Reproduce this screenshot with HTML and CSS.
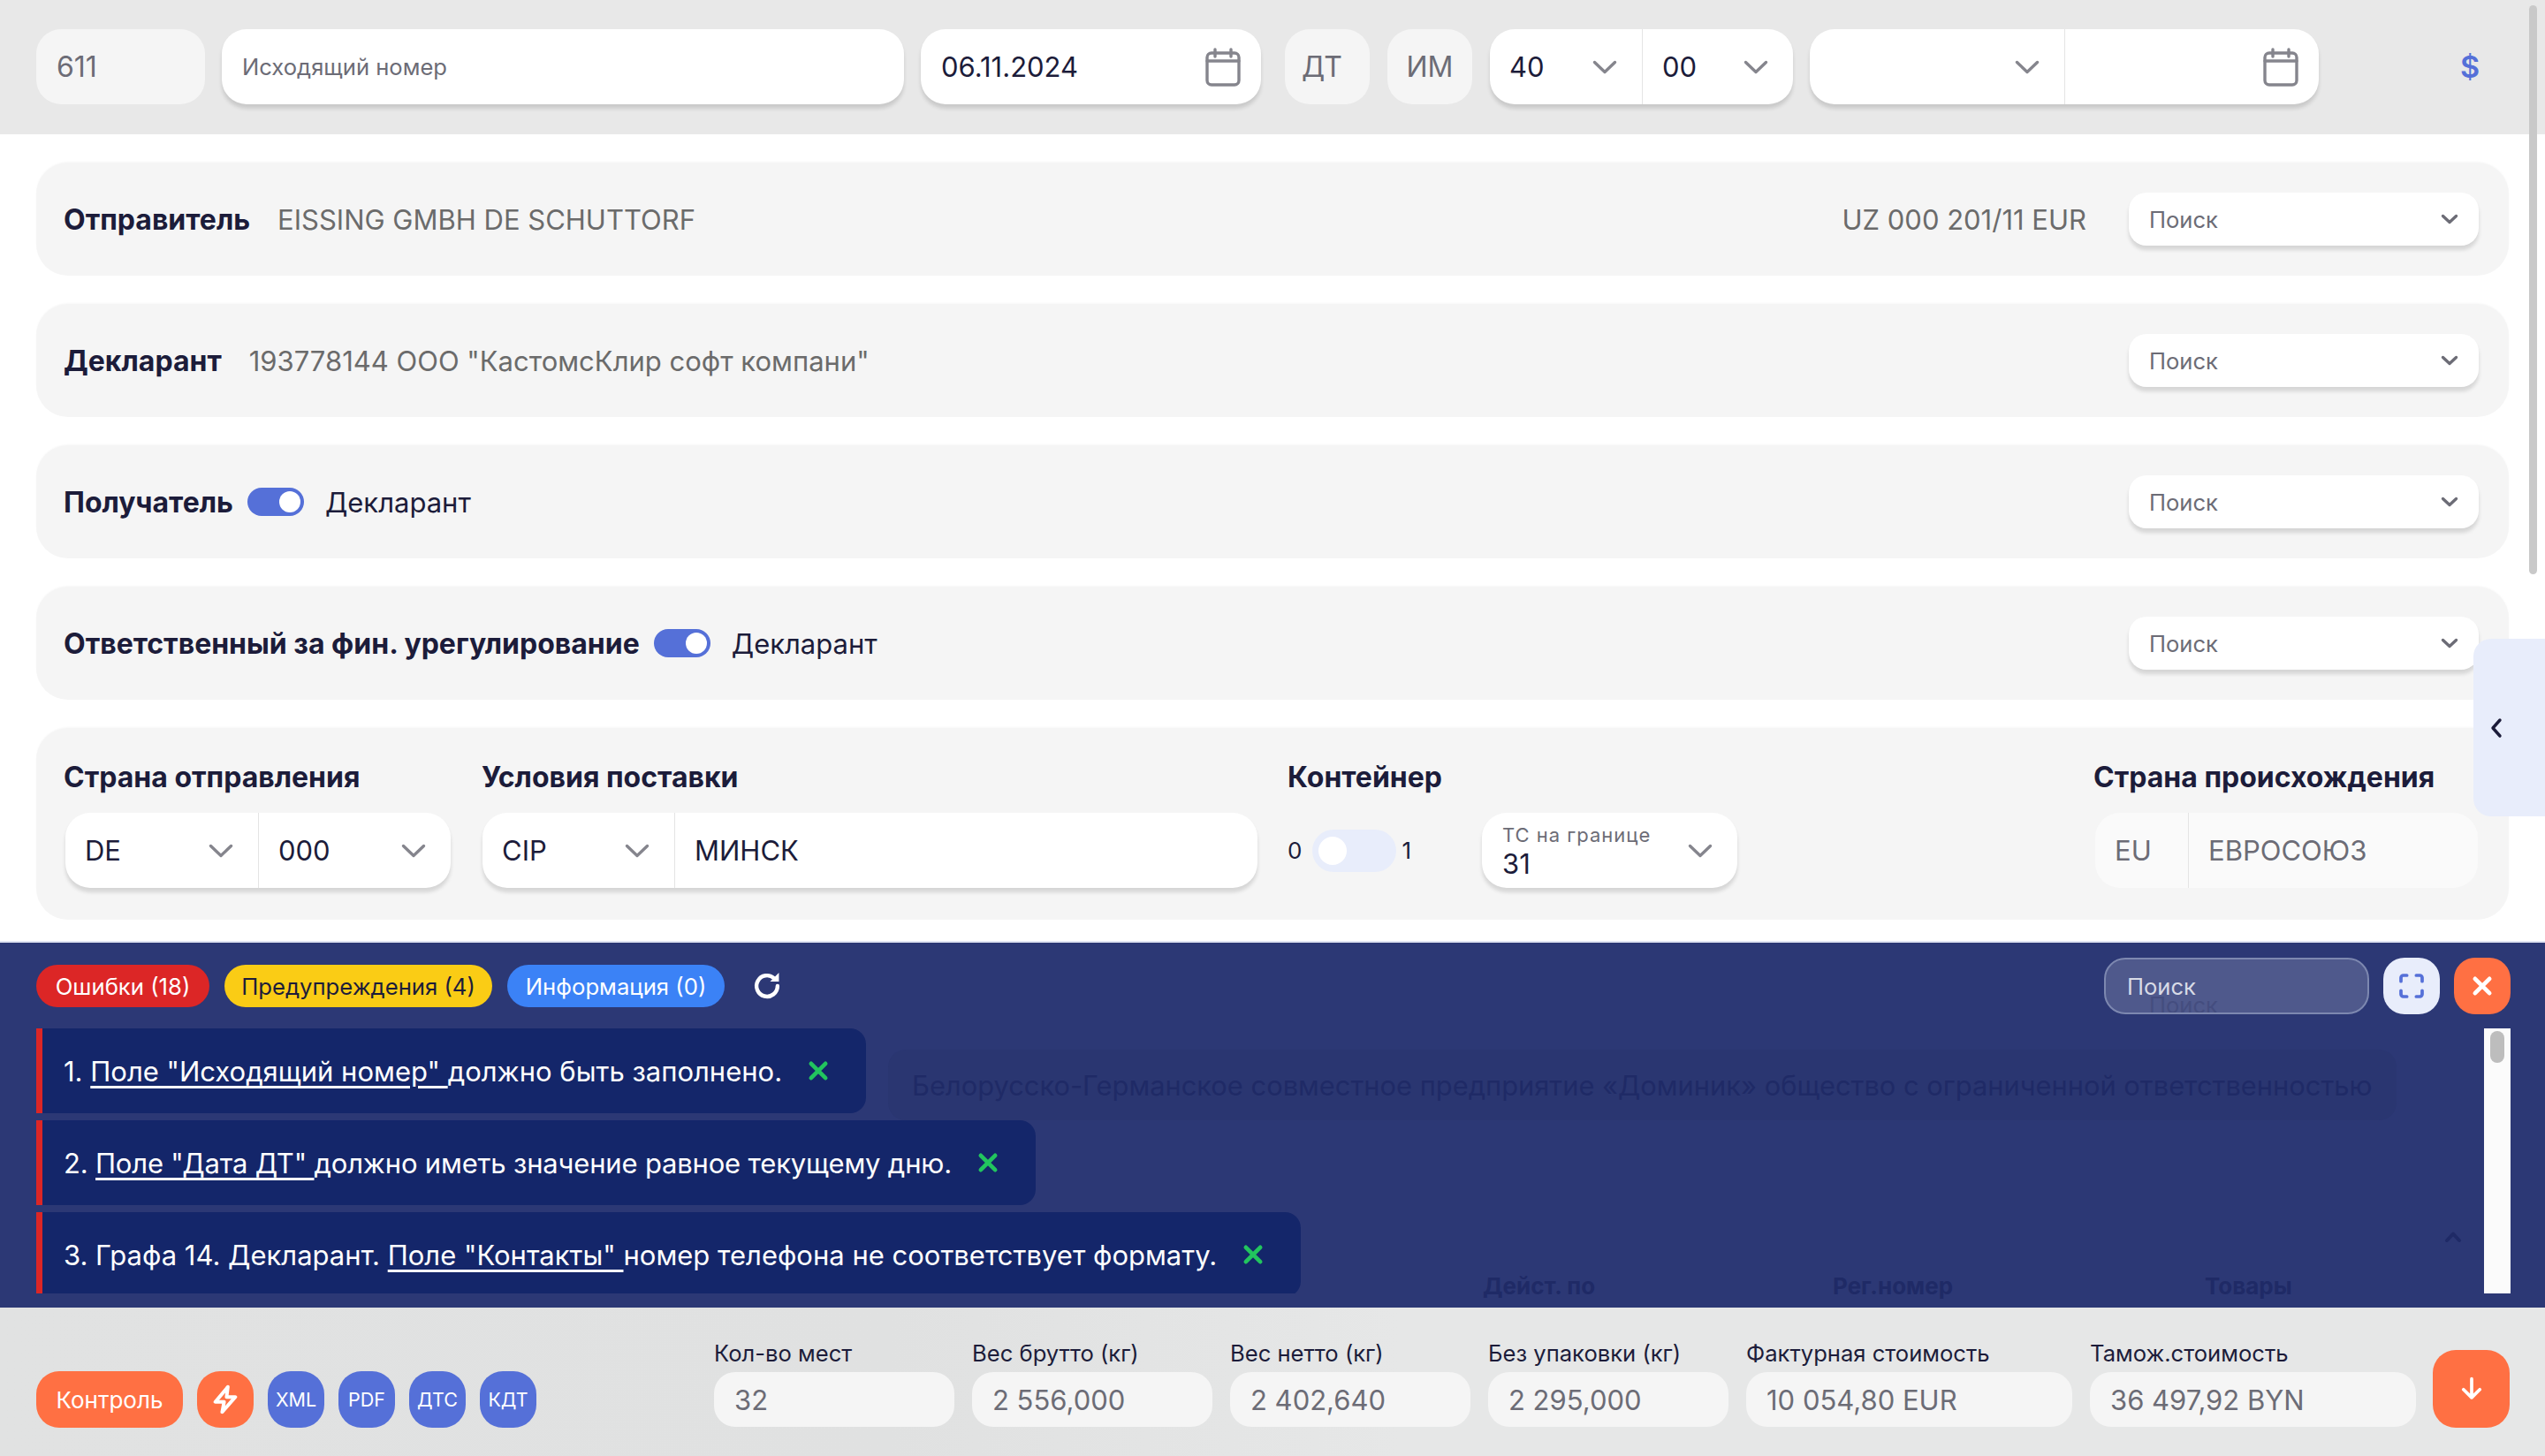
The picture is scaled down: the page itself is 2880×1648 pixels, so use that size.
FILE: index.html
```html
<!DOCTYPE html>
<html lang="ru">
<head>
  <meta charset="utf-8">
  <title>Декларация</title>
  <link rel="stylesheet" href="styles.css">
</head>
<body>
  <svg class="sprite" width="0" height="0">
    <symbol id="chev" viewBox="0 0 28 16"><path d="M2.5 2.5 14 13.5 25.5 2.5" fill="none" stroke="currentColor" stroke-width="3.4" stroke-linecap="round" stroke-linejoin="round"/></symbol>
    <symbol id="chev-bold" viewBox="0 0 20 12"><path d="M2.5 2.5 10 9.5 17.5 2.5" fill="none" stroke="currentColor" stroke-width="3.4" stroke-linecap="round" stroke-linejoin="round"/></symbol>
    <symbol id="cal" viewBox="0 0 40 44"><path d="M11 2v8M29 2v8M2 15h36" fill="none" stroke="currentColor" stroke-width="3.4" stroke-linecap="round"/><rect x="2" y="6" width="36" height="36" rx="5" fill="none" stroke="currentColor" stroke-width="3.4"/></symbol>
    <symbol id="cross" viewBox="0 0 24 24"><path d="M5 5l14 14M19 5 5 19" fill="none" stroke="currentColor" stroke-width="4" stroke-linecap="round"/></symbol>
  </svg>

  <header class="top-bar">
    <div class="field w-num disabled">611</div>
    <div class="field w-out raised placeholder">Исходящий номер</div>
    <div class="field w-date raised"><span>06.11.2024</span><svg class="ico-cal"><use href="#cal"/></svg></div>
    <div class="field w-short disabled first-short">ДТ</div>
    <div class="field w-short disabled">ИМ</div>
    <div class="group raised after-short">
      <div class="cell w-40"><span>40</span><svg class="ico-chev"><use href="#chev"/></svg></div>
      <div class="cell w-00"><span>00</span><svg class="ico-chev"><use href="#chev"/></svg></div>
    </div>
    <div class="group raised">
      <div class="cell w-empty"><span></span><svg class="ico-chev"><use href="#chev"/></svg></div>
      <div class="cell w-empty2"><span></span><svg class="ico-cal end"><use href="#cal"/></svg></div>
    </div>
    <div class="dollar">$</div>
  </header>

  <main class="content">
    <section class="card row">
      <b class="card-title">Отправитель</b>
      <span class="card-value first">EISSING GMBH DE SCHUTTORF</span>
      <span class="card-value right">UZ 000 201/11 EUR</span>
      <div class="search-select"><span>Поиск</span><svg class="ico-small"><use href="#chev-bold"/></svg></div>
    </section>
    <section class="card row">
      <b class="card-title">Декларант</b>
      <span class="card-value first">193778144 ООО "КастомсКлир софт компани"</span>
      <div class="search-select push"><span>Поиск</span><svg class="ico-small"><use href="#chev-bold"/></svg></div>
    </section>
    <section class="card row">
      <b class="card-title">Получатель</b>
      <span class="toggle"><i></i></span>
      <span class="card-text">Декларант</span>
      <div class="search-select push"><span>Поиск</span><svg class="ico-small"><use href="#chev-bold"/></svg></div>
    </section>
    <section class="card row">
      <b class="card-title">Ответственный за фин. урегулирование</b>
      <span class="toggle"><i></i></span>
      <span class="card-text">Декларант</span>
      <div class="search-select push"><span>Поиск</span><svg class="ico-small"><use href="#chev-bold"/></svg></div>
    </section>
    <section class="card terms">
      <div class="col col-country">
        <b class="card-title">Страна отправления</b>
        <div class="group raised">
          <div class="cell w-de"><span>DE</span><svg class="ico-chev"><use href="#chev"/></svg></div>
          <div class="cell w-000"><span>000</span><svg class="ico-chev"><use href="#chev"/></svg></div>
        </div>
      </div>
      <div class="col col-terms">
        <b class="card-title">Условия поставки</b>
        <div class="group raised">
          <div class="cell w-cip"><span>CIP</span><svg class="ico-chev"><use href="#chev"/></svg></div>
          <div class="cell w-city"><span>МИНСК</span></div>
        </div>
      </div>
      <div class="col col-box">
        <b class="card-title">Контейнер</b>
        <div class="box-row">
          <span class="card-text small">0</span>
          <span class="switch"><i></i></span>
          <span class="card-text small">1</span>
          <div class="field w-ts raised">
            <div class="ts-text"><small>ТС на границе</small><span>31</span></div>
            <svg class="ico-chev"><use href="#chev"/></svg>
          </div>
        </div>
      </div>
      <div class="col col-origin">
        <b class="card-title">Страна происхождения</b>
        <div class="group flat">
          <div class="cell w-eu"><span>EU</span></div>
          <div class="cell w-union"><span>ЕВРОСОЮЗ</span></div>
        </div>
      </div>
    </section>
  </main>

  <section class="panel">
    <div class="ghosts">
      <span class="ghost g-search">Поиск</span>
      <span class="ghost-card"></span>
      <span class="ghost g-company">Белорусско-Германское совместное предприятие «Доминик» общество с ограниченной ответственностью</span>
      <svg class="ghost g-chev" viewBox="0 0 20 14"><path d="M3 11 10 3.5 17 11" fill="none" stroke="currentColor" stroke-width="4" stroke-linecap="round" stroke-linejoin="round"/></svg>
      <span class="ghost g-date">Дейст. по</span>
      <span class="ghost g-reg">Рег.номер</span>
      <span class="ghost g-goods">Товары</span>
    </div>

    <div class="panel-head">
      <button class="pill red">Ошибки (18)</button>
      <button class="pill yellow">Предупреждения (4)</button>
      <button class="pill blue">Информация (0)</button>
      <svg class="refresh" viewBox="0 0 24 24"><path d="M19.5 12a7.5 7.5 0 1 1-2.4-5.5" fill="none" stroke="currentColor" stroke-width="2.8" stroke-linecap="round"/><path d="M20.5 2.5v6.3h-6.3z" fill="currentColor"/></svg>
      <div class="panel-search">Поиск</div>
      <button class="square light"><svg viewBox="0 0 24 24"><path d="M3 8V5a2 2 0 0 1 2-2h3M16 3h3a2 2 0 0 1 2 2v3M21 16v3a2 2 0 0 1-2 2h-3M8 21H5a2 2 0 0 1-2-2v-3" fill="none" stroke="currentColor" stroke-width="2.8" stroke-linecap="round"/></svg></button>
      <button class="square orange"><svg><use href="#cross"/></svg></button>
    </div>

    <div class="messages">
      <div class="msg"><span>1. <u>Поле "Исходящий номер" </u>должно быть заполнено.</span><svg><use href="#cross"/></svg></div>
      <div class="msg tight"><span>2. <u>Поле "Дата ДТ" </u>должно иметь значение равное текущему дню.</span><svg><use href="#cross"/></svg></div>
      <div class="msg"><span>3. Графа 14. Декларант. <u>Поле "Контакты" </u>номер телефона не соответствует формату.</span><svg><use href="#cross"/></svg></div>
      <div class="msg-track"><i></i></div>
    </div>
  </section>

  <footer class="bottom-bar">
    <button class="act orange wide">Контроль</button>
    <button class="act orange"><svg viewBox="0 0 24 24"><path d="M14 2 4 14h7l-1.5 8L20 10h-7z" fill="none" stroke="currentColor" stroke-width="2.8" stroke-linejoin="round"/></svg></button>
    <button class="act indigo">XML</button>
    <button class="act indigo">PDF</button>
    <button class="act indigo">ДТС</button>
    <button class="act indigo">КДТ</button>

    <div class="totals">
      <div class="total w-total"><label>Кол-во мест</label><div class="total-val">32</div></div>
      <div class="total w-total"><label>Вес брутто (кг)</label><div class="total-val">2 556,000</div></div>
      <div class="total w-total"><label>Вес нетто (кг)</label><div class="total-val">2 402,640</div></div>
      <div class="total w-total"><label>Без упаковки (кг)</label><div class="total-val">2 295,000</div></div>
      <div class="total w-money"><label>Фактурная стоимость</label><div class="total-val">10 054,80 EUR</div></div>
      <div class="total w-money"><label>Тамож.стоимость</label><div class="total-val">36 497,92 BYN</div></div>
    </div>
    <button class="act orange down"><svg viewBox="0 0 24 24"><path d="M12 4v15M5.5 12.5 12 19l6.500-6.500" fill="none" stroke="currentColor" stroke-width="2.6" stroke-linecap="round" stroke-linejoin="round"/></svg></button>
  </footer>

  <div class="side-tab"><svg viewBox="0 0 16 24"><path d="M12 3 4 12l8 9" fill="none" stroke="currentColor" stroke-width="3.4" stroke-linecap="round" stroke-linejoin="round"/></svg></div>
  <div class="page-scroll"></div>
</body>
</html>
```

FILE: styles.css
```css
* {
  box-sizing: border-box;
}

html,
body {
  margin: 0;
  height: 1648px;
  overflow: hidden;
}

body {
  position: relative;
  display: flex;
  flex-direction: column;
  width: 2880px;
  background: #fff;
  font-family: Inter, "Noto Sans", sans-serif;
  font-size: 31px;
  color: #1c1c3a;
}

button {
  border: none;
  font: inherit;
  padding: 0;
}

.sprite {
  position: absolute;
}

/* top bar */
.top-bar {
  display: flex;
  align-items: center;
  gap: 19px;
  height: 152px;
  padding: 0 41px 1px;
  flex: none;
  background: #e8e8e8;
}

.field {
  display: flex;
  align-items: center;
  justify-content: space-between;
  height: 85px;
  padding: 0 23px;
  border-radius: 28px;
  flex: none;
}

.raised {
  background: #fff;
  box-shadow: 0 5px 4px rgba(0, 0, 0, 0.13);
}

.disabled {
  background: #f5f5f5;
  color: #6c6c76;
  font-size: 32px;
}

.placeholder {
  color: #6c6c76;
  font-size: 25.6px;
}

.w-num { width: 191px; }
.w-out { width: 772px; }
.w-date { width: 385px; }
.w-short { width: 96px; margin-left: 1px; justify-content: center; padding: 0; }
.first-short { margin-left: 8px; padding-right: 12px; }
.after-short { margin-left: 1px; }

.group {
  display: flex;
  align-self: flex-start;
  height: 85px;
  border-radius: 28px;
  flex: none;
}

.top-bar .group {
  align-self: center;
}

.group.flat {
  background: #fafafa;
  color: #6c6c76;
}

.cell {
  display: flex;
  align-items: center;
  justify-content: space-between;
  padding: 0 28px 0 22px;
  border-left: 1px solid #e4e4e4;
}

.cell:first-child {
  border-left: none;
}

.w-40 { width: 172px; }
.w-00 { width: 171px; }
.w-empty { width: 288px; }
.w-empty2 { width: 288px; }
.w-de { width: 218px; }
.w-000 { width: 218px; }
.w-cip { width: 217px; }
.w-city { width: 660px; }
.w-eu { width: 105px; }
.w-union { width: 328px; }

.ico-chev {
  width: 28px;
  height: 16px;
  color: #85858d;
}

.ico-cal {
  width: 40px;
  height: 44px;
  color: #85858d;
}

.ico-cal.end {
  margin-right: -5px;
}

.ico-small {
  width: 20px;
  height: 12px;
  color: #6c6c76;
}

.dollar {
  margin-left: 141px;
  color: #5570d8;
  font-size: 34px;
  font-weight: 600;
}

/* cards */
.content {
  display: flex;
  flex-direction: column;
  gap: 32px;
  padding: 32px 41px 0;
  height: 913px;
  flex: none;
}

.card {
  width: 2798px;
  background: #f5f5f5;
  border-radius: 36px;
  box-shadow: 0 -1px 2px rgba(0, 0, 0, 0.03);
}

.row {
  display: flex;
  align-items: center;
  height: 128px;
  padding: 0 34px 0 31px;
  flex: none;
}

.card-title {
  font-weight: 700;
  font-size: 32px;
  white-space: nowrap;
}

.card-value {
  color: #6b6b6b;
}

.card-value.first {
  margin-left: 31px;
}

.card-value.right {
  margin-left: auto;
}

.card-text {
  margin-left: 24px;
}

.card-text.small {
  margin-left: 0;
  font-size: 26px;
}

.search-select {
  display: flex;
  align-items: center;
  justify-content: space-between;
  width: 396px;
  height: 60px;
  margin-left: 48px;
  padding: 0 23px;
  background: #fff;
  border-radius: 20px;
  box-shadow: 0 5px 4px rgba(0, 0, 0, 0.13);
  color: #6c6c76;
  font-size: 25.6px;
}

.search-select.push {
  margin-left: auto;
}

.toggle {
  display: flex;
  align-items: center;
  justify-content: flex-end;
  width: 64px;
  height: 32px;
  margin-left: 16px;
  padding-right: 4px;
  background: #5570d8;
  border-radius: 16px;
}

.toggle i {
  width: 24px;
  height: 24px;
  background: #fff;
  border-radius: 50%;
}

.terms {
  position: relative;
  display: flex;
  height: 217px;
  padding: 36px 0 0 31px;
  flex: none;
}

.col {
  display: flex;
  flex-direction: column;
  gap: 20px;
}

.col .card-title {
  height: 40px;
  line-height: 40px;
}

.col-country { width: 473px; }
.col-country .group { margin-left: 2px; }
.col-terms { width: 912px; }
.col-terms .group { margin-left: 1px; }
.col-box { width: 912px; }
.col-origin .group { margin-left: 2px; }

.box-row {
  display: flex;
  align-items: center;
  height: 85px;
}

.switch {
  display: flex;
  align-items: center;
  width: 95px;
  height: 48px;
  margin: 0 6px 0 12px;
  padding-left: 7px;
  background: #e8edfb;
  border-radius: 24px;
}

.switch i {
  width: 32px;
  height: 32px;
  background: #fff;
  border-radius: 50%;
}

.w-ts {
  width: 289px;
  margin-left: 80px;
  padding-right: 28px;
}

.ts-text {
  display: flex;
  flex-direction: column;
  padding-top: 3px;
  line-height: 1.1;
}

.ts-text small {
  color: #6c6c76;
  font-size: 22px;
  letter-spacing: 1px;
}

.ts-text span {
  margin-top: 3px;
  font-size: 31px;
}

/* error panel */
.panel {
  position: relative;
  display: flex;
  flex-direction: column;
  gap: 16px;
  height: 415px;
  padding: 17px 39px 0 41px;
  flex: none;
  background: #2c3875;
  border-top: 2px solid #e0e4f2;
  overflow: hidden;
}

.panel-head {
  position: relative;
  display: flex;
  align-items: center;
  gap: 17px;
  height: 64px;
  flex: none;
}

.pill {
  height: 48px;
  padding: 0;
  border-radius: 24px;
  font-size: 25.7px;
  white-space: nowrap;
}

.pill.red { width: 196px; background: #dc2626; color: #fff; }
.pill.yellow { width: 303px; background: #facc15; color: #1c1c3a; }
.pill.blue { width: 246px; background: #3b82f6; color: #fff; }

.refresh {
  width: 38px;
  height: 38px;
  margin-left: 12px;
  color: #fff;
}

.panel-search {
  display: flex;
  align-items: center;
  width: 300px;
  height: 64px;
  margin-left: auto;
  padding: 0 24px;
  background: rgba(255, 255, 255, 0.17);
  border: 2px solid #7d88b0;
  border-radius: 24px;
  color: #d8dbe6;
  font-size: 25.6px;
}

.square {
  display: flex;
  align-items: center;
  justify-content: center;
  width: 64px;
  height: 64px;
  border-radius: 24px;
}

.square svg {
  width: 28px;
  height: 28px;
}

.square.light { margin-left: -1px; background: #e8edfb; color: #5570d8; }
.square.light svg { width: 32px; height: 32px; }
.square.orange { margin-left: -1px; background: #ff7043; color: #fff; }

.messages {
  position: relative;
  display: flex;
  flex-direction: column;
  align-items: flex-start;
  gap: 8px;
  height: 300px;
  overflow: hidden;
}

.msg {
  display: flex;
  align-items: center;
  gap: 27px;
  height: 96px;
  padding: 0 40px 0 24px;
  flex: none;
  background: #14266a;
  border-left: 7px solid #dc2626;
  border-radius: 0 18px 18px 0;
  color: #fff;
  white-space: pre;
}

.msg.tight {
  letter-spacing: -0.18px;
}

.msg svg {
  width: 28px;
  height: 28px;
  color: #22c55e;
}

.msg u {
  text-underline-offset: 5px;
}

.msg-track {
  position: absolute;
  top: 0;
  right: 0;
  width: 30px;
  height: 300px;
  padding: 3px 7px;
  background: #fbfbfb;
}

.msg-track i {
  display: block;
  height: 36px;
  background: #bdbdbd;
  border-radius: 8px;
}

/* what shows through the panel */
.ghosts {
  position: absolute;
  inset: 0;
  color: #1f2a66;
}

.ghost {
  position: absolute;
  white-space: nowrap;
}

.ghost-card {
  position: absolute;
  left: 1005px;
  top: 121px;
  width: 1707px;
  height: 80px;
  background: #2a3671;
  border-radius: 20px;
}

.g-search { left: 2432px; top: 55px; font-size: 25.6px; }
.g-company { left: 1032px; top: 143px; font-size: 30.85px; }
.g-chev { left: 2766px; top: 326px; width: 20px; height: 14px; }
.g-date { left: 1678px; top: 373px; font-size: 26px; font-weight: 700; }
.g-reg { left: 2074px; top: 373px; font-size: 26px; font-weight: 700; }
.g-goods { left: 2495px; top: 373px; font-size: 26px; font-weight: 700; }

/* bottom */
.bottom-bar {
  display: flex;
  align-items: flex-end;
  gap: 16px;
  height: 168px;
  padding: 0 40px 32px 41px;
  flex: 1;
  background: linear-gradient(90deg, #e1e2e2, #e0e1e1 35%, #e6e7e7 55%);
}

.act {
  display: flex;
  align-items: center;
  justify-content: center;
  width: 64px;
  height: 64px;
  border-radius: 26px;
  color: #fff;
  font-size: 21.5px;
}

.act svg {
  width: 34px;
  height: 34px;
}

.act.wide {
  width: 166px;
  font-size: 26px;
}

.act.orange { background: #ff7043; }
.act.indigo { background: #5570d8; }

.act.down {
  width: 87px;
  height: 88px;
  margin-left: 3px;
}

.totals {
  display: flex;
  gap: 20px;
  margin-left: auto;
  margin-bottom: 1px;
}

.total {
  display: flex;
  flex-direction: column;
  gap: 5px;
}

.total label {
  height: 32px;
  line-height: 32px;
  font-size: 25.6px;
  white-space: nowrap;
}

.total-val {
  display: flex;
  align-items: center;
  height: 62px;
  padding: 0 23px;
  background: #f5f5f5;
  border-radius: 24px;
  color: #6c6c76;
}

.w-total { width: 272px; }
.w-money { width: 369px; }

/* overlays */
.side-tab {
  position: absolute;
  left: 2799px;
  top: 723px;
  display: flex;
  align-items: center;
  width: 81px;
  height: 201px;
  padding-left: 18px;
  background: #e8edfb;
  border-radius: 20px 0 0 20px;
  color: #1c1c3a;
}

.side-tab svg {
  width: 16px;
  height: 24px;
}

.page-scroll {
  position: absolute;
  left: 2862px;
  top: 6px;
  width: 9px;
  height: 644px;
  background: #c9c9c9;
  border-radius: 5px;
}
```
